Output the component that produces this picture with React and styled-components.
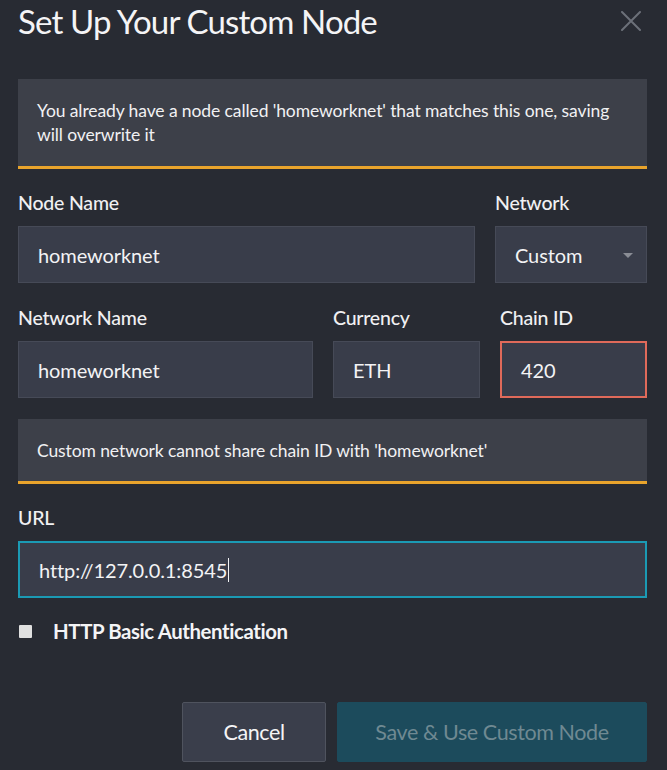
import React from "react";
import styled, { createGlobalStyle } from "styled-components";

const GlobalStyle = createGlobalStyle`
  html, body {
    margin: 0;
    padding: 0;
    background: #282b33;
  }
  body {
    font-family: Lato, "Open Sans", "Liberation Sans", sans-serif;
    color: #ffffff;
  }
`;

const Modal = styled.div`
  width: 667px;
  height: 770px;
  box-sizing: border-box;
  padding: 0 20px 0 18px;
  background: #282b33;
  overflow: hidden;
`;

const Header = styled.div`
  display: flex;
  align-items: center;
  justify-content: space-between;
  height: 42px;
  margin-bottom: 37px;
`;

const Title = styled.h1`
  margin: 0;
  font-size: 33px;
  font-weight: 400;
  letter-spacing: -0.85px;
  color: #f4f4f6;
`;

const Close = styled.button`
  width: 22px;
  height: 22px;
  padding: 0;
  margin-right: 5px;
  border: none;
  background: none;
  display: flex;
  align-items: center;
  justify-content: center;
`;

const Notice = styled.div`
  background: #3d4049;
  border-bottom: 3px solid #e9a42c;
  padding: ${({ $pad }) => $pad || "20px 19px 19px"};
  font-size: 17.5px;
  line-height: 24px;
  letter-spacing: -0.1px;
  color: #f1f1f3;
  margin-bottom: ${({ $mb }) => $mb || "22px"};
`;

const Row = styled.div`
  display: grid;
  grid-template-columns: ${({ $cols }) => $cols};
  column-gap: 20px;
  margin-bottom: ${({ $mb }) => $mb || "23px"};
`;

const Field = styled.div`
  display: flex;
  flex-direction: column;
`;

const Label = styled.label`
  font-size: 19.5px;
  line-height: 24px;
  font-weight: 500;
  color: #f0f0f2;
  letter-spacing: -0.2px;
  margin-bottom: 11px;
`;

const InputBox = styled.div`
  position: relative;
  height: 57px;
  box-sizing: border-box;
  display: flex;
  align-items: center;
  padding-left: 19px;
  background: #393d4a;
  border: ${({ $state }) =>
    $state === "error"
      ? "2px solid #e06a5a"
      : $state === "focus"
      ? "2px solid #1b9ab4"
      : "1px solid #464a57"};
  font-size: 20px;
  color: #f3f3f5;
  letter-spacing: -0.1px;
`;

const Caret = styled.span`
  display: inline-block;
  width: 1px;
  height: 24px;
  background: #f3f3f5;
  margin-left: 1px;
  vertical-align: middle;
`;

const Arrow = styled.span`
  position: absolute;
  right: 13px;
  top: 50%;
  margin-top: -2px;
  width: 0;
  height: 0;
  border-left: 5px solid transparent;
  border-right: 5px solid transparent;
  border-top: 5px solid #8a8d95;
`;

const CheckRow = styled.div`
  display: flex;
  align-items: center;
  gap: 21px;
  margin-top: 21px;
  padding-left: 1px;
`;

const Checkbox = styled.span`
  width: 13px;
  height: 13px;
  background: #e0e0e0;
  border-radius: 1px;
`;

const CheckLabel = styled.span`
  font-size: 20.4px;
  font-weight: 700;
  color: #f4f4f6;
  letter-spacing: -0.4px;
`;

const Footer = styled.div`
  display: flex;
  justify-content: flex-end;
  gap: 11px;
  margin-top: 59px;
`;

const Button = styled.button`
  height: 60px;
  box-sizing: border-box;
  font-family: inherit;
  font-size: 21.5px;
  letter-spacing: -0.4px;
  width: ${({ $w }) => $w};
  border: 1px solid ${({ $primary }) => ($primary ? "#1c4b5c" : "#4f535e")};
  background: ${({ $primary }) => ($primary ? "#1c4b5c" : "#3a3e4b")};
  color: ${({ $primary }) => ($primary ? "#6f8992" : "#f4f4f6")};
  border-radius: 2px;
`;

export default function App() {
  return (
    <>
      <GlobalStyle />
      <Modal>
        <Header>
          <Title>Set Up Your Custom Node</Title>
          <Close aria-label="Close">
            <svg width="20" height="20" viewBox="0 0 20 20">
              <path
                d="M1 1 L19 19 M19 1 L1 19"
                stroke="#6c7079"
                strokeWidth="2"
                strokeLinecap="round"
              />
            </svg>
          </Close>
        </Header>

        <Notice>
          You already have a node called 'homeworknet' that matches this one, saving
          will overwrite it
        </Notice>

        <Row $cols="457px 152px">
          <Field>
            <Label>Node Name</Label>
            <InputBox>homeworknet</InputBox>
          </Field>
          <Field>
            <Label>Network</Label>
            <InputBox>
              Custom
              <Arrow />
            </InputBox>
          </Field>
        </Row>

        <Row $cols="295px 147px 147px" $mb="21px">
          <Field>
            <Label>Network Name</Label>
            <InputBox>homeworknet</InputBox>
          </Field>
          <Field>
            <Label>Currency</Label>
            <InputBox>ETH</InputBox>
          </Field>
          <Field>
            <Label>Chain ID</Label>
            <InputBox $state="error">420</InputBox>
          </Field>
        </Row>

        <Notice $pad="20px 19px 18px">
          Custom network cannot share chain ID with 'homeworknet'
        </Notice>

        <Field>
          <Label>URL</Label>
          <InputBox $state="focus">
            http://127.0.0.1:8545
            <Caret />
          </InputBox>
        </Field>

        <CheckRow>
          <Checkbox />
          <CheckLabel>HTTP Basic Authentication</CheckLabel>
        </CheckRow>

        <Footer>
          <Button $w="144px">Cancel</Button>
          <Button $primary $w="310px">
            Save &amp; Use Custom Node
          </Button>
        </Footer>
      </Modal>
    </>
  );
}
